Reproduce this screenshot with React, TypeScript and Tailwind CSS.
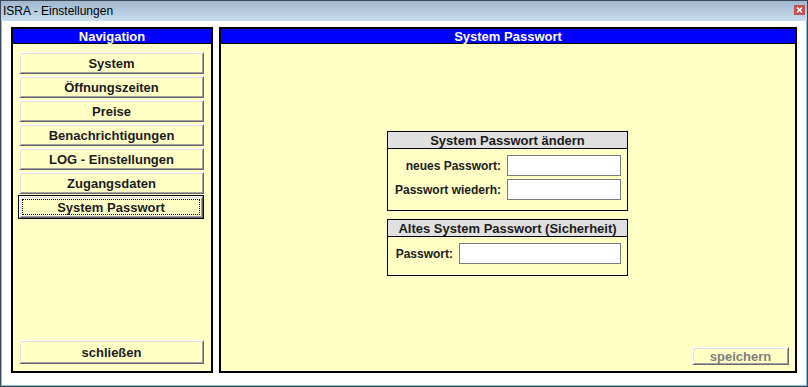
import React from 'react'

const navItems = [
    'System',
    'Öffnungszeiten',
    'Preise',
    'Benachrichtigungen',
    'LOG - Einstellungen',
    'Zugangsdaten',
    'System Passwort',
]

const btn3d =
    'border border-t-white border-l-white border-r-[#696969] border-b-[#696969] shadow-[inset_1px_1px_0_#e3e3e3,inset_-1px_-1px_0_#a0a0a0]'

const NavButton: React.FC<{ label: string; active?: boolean }> = ({ label, active }) => {
    if (active) {
        return (
            <div className="w-[186px] h-[24px] border border-black -ml-[1px] -mt-[1px]">
                <div className={`h-full ${btn3d} bg-[#ffffc6] flex items-center justify-center p-[2px]`}>
                    <div className="w-full h-full border border-dotted border-black flex items-center justify-center text-[13px] font-bold text-[#1c1c1c] leading-none">
                        {label}
                    </div>
                </div>
            </div>
        )
    }
    return (
        <div className={`w-[185px] h-[22px] ${btn3d} bg-[#ffffc6] flex items-center justify-center text-[13px] font-bold text-[#1c1c1c] leading-none`}>
            {label}
        </div>
    )
}

const PanelHeader: React.FC<{ title: string }> = ({ title }) => (
    <div className="h-[15px] bg-[#0000ff] border-b border-black flex items-center justify-center text-white text-[13px] font-bold leading-none">
        {title}
    </div>
)

const GroupBox: React.FC<{ title: string; children: React.ReactNode; pb: string }> = ({ title, children, pb }) => (
    <div className="w-[241px] border border-black bg-[#ffffc6]">
        <div className="h-[17px] bg-[#e0e0e0] border-b border-black flex items-center justify-center text-[13px] font-bold text-[#1c1c1c] leading-none">
            {title}
        </div>
        <div className={`pt-[6px] pl-[5px] pr-[6px] ${pb} flex flex-col gap-[3px]`}>{children}</div>
    </div>
)

const Field: React.FC<{ label: string; labelW: string; inputW: string }> = ({ label, labelW, inputW }) => (
    <div className="flex items-center justify-end gap-[6px]">
        <span className={`${labelW} text-right text-[12px] font-bold text-[#1c1c1c] leading-none`}>{label}</span>
        <div className={`${inputW} h-[21px] bg-white border border-[#7a7a7a]`} />
    </div>
)

export default function App() {
    return (
        <div
            className="w-[808px] h-[387px] border border-[#3c4a58] flex flex-col bg-white"
            style={{ fontFamily: '"Liberation Sans", Arial, sans-serif' }}
        >
            {/* Titelleiste */}
            <div className="h-[20px] flex items-center justify-between pl-[2px] pr-[2px] bg-gradient-to-b from-[#9fb7cf] to-[#c9ddef]">
                <span className="text-[12px] text-black">ISRA - Einstellungen</span>
                <div className="w-[11px] h-[10px] bg-[#c75050] flex items-center justify-center mb-[3px]">
                    <svg width="7" height="6" viewBox="0 0 7 6">
                        <path d="M1 0.5 L6 5.5 M6 0.5 L1 5.5" stroke="white" strokeWidth="1.6" />
                    </svg>
                </div>
            </div>

            <div className="flex-1 flex gap-[6px] border-x border-b border-[#7ec0ea] pt-[6px] pl-[9px] pr-[9px] pb-[12px]">
                {/* Navigation */}
                <div className="w-[202px] border-2 border-black bg-[#ffffc6] flex flex-col">
                    <PanelHeader title="Navigation" />
                    <div className="flex-1 flex flex-col pt-[8px] pl-[6px] gap-[2px]">
                        {navItems.map(item => (
                            <NavButton key={item} label={item} active={item === 'System Passwort'} />
                        ))}
                    </div>
                    <div className="pl-[6px] pb-[7px]">
                        <div className={`w-[185px] h-[24px] ${btn3d} bg-[#ffffc6] flex items-center justify-center text-[13px] font-bold text-[#1c1c1c] leading-none`}>
                            schließen
                        </div>
                    </div>
                </div>

                {/* Inhalt */}
                <div className="flex-1 border-2 border-black bg-[#ffffc6] flex flex-col">
                    <PanelHeader title="System Passwort" />
                    <div className="flex-1 flex flex-col items-start pl-[166px] pt-[87px] gap-[8px]">
                        <GroupBox title="System Passwort ändern" pb="pb-[10px]">
                            <Field label="neues Passwort:" labelW="w-[108px]" inputW="w-[114px]" />
                            <Field label="Passwort wiederh:" labelW="w-[108px]" inputW="w-[114px]" />
                        </GroupBox>
                        <GroupBox title="Altes System Passwort (Sicherheit)" pb="pb-[11px]">
                            <Field label="Passwort:" labelW="w-[60px]" inputW="w-[162px]" />
                        </GroupBox>
                    </div>
                    <div className="flex justify-end pr-[6px] pb-[6px]">
                        <div className={`w-[97px] h-[18px] ${btn3d} bg-[#ffffc6] flex items-center justify-center text-[13px] font-bold text-[#808080] leading-none`}>
                            speichern
                        </div>
                    </div>
                </div>
            </div>
        </div>
    )
}
